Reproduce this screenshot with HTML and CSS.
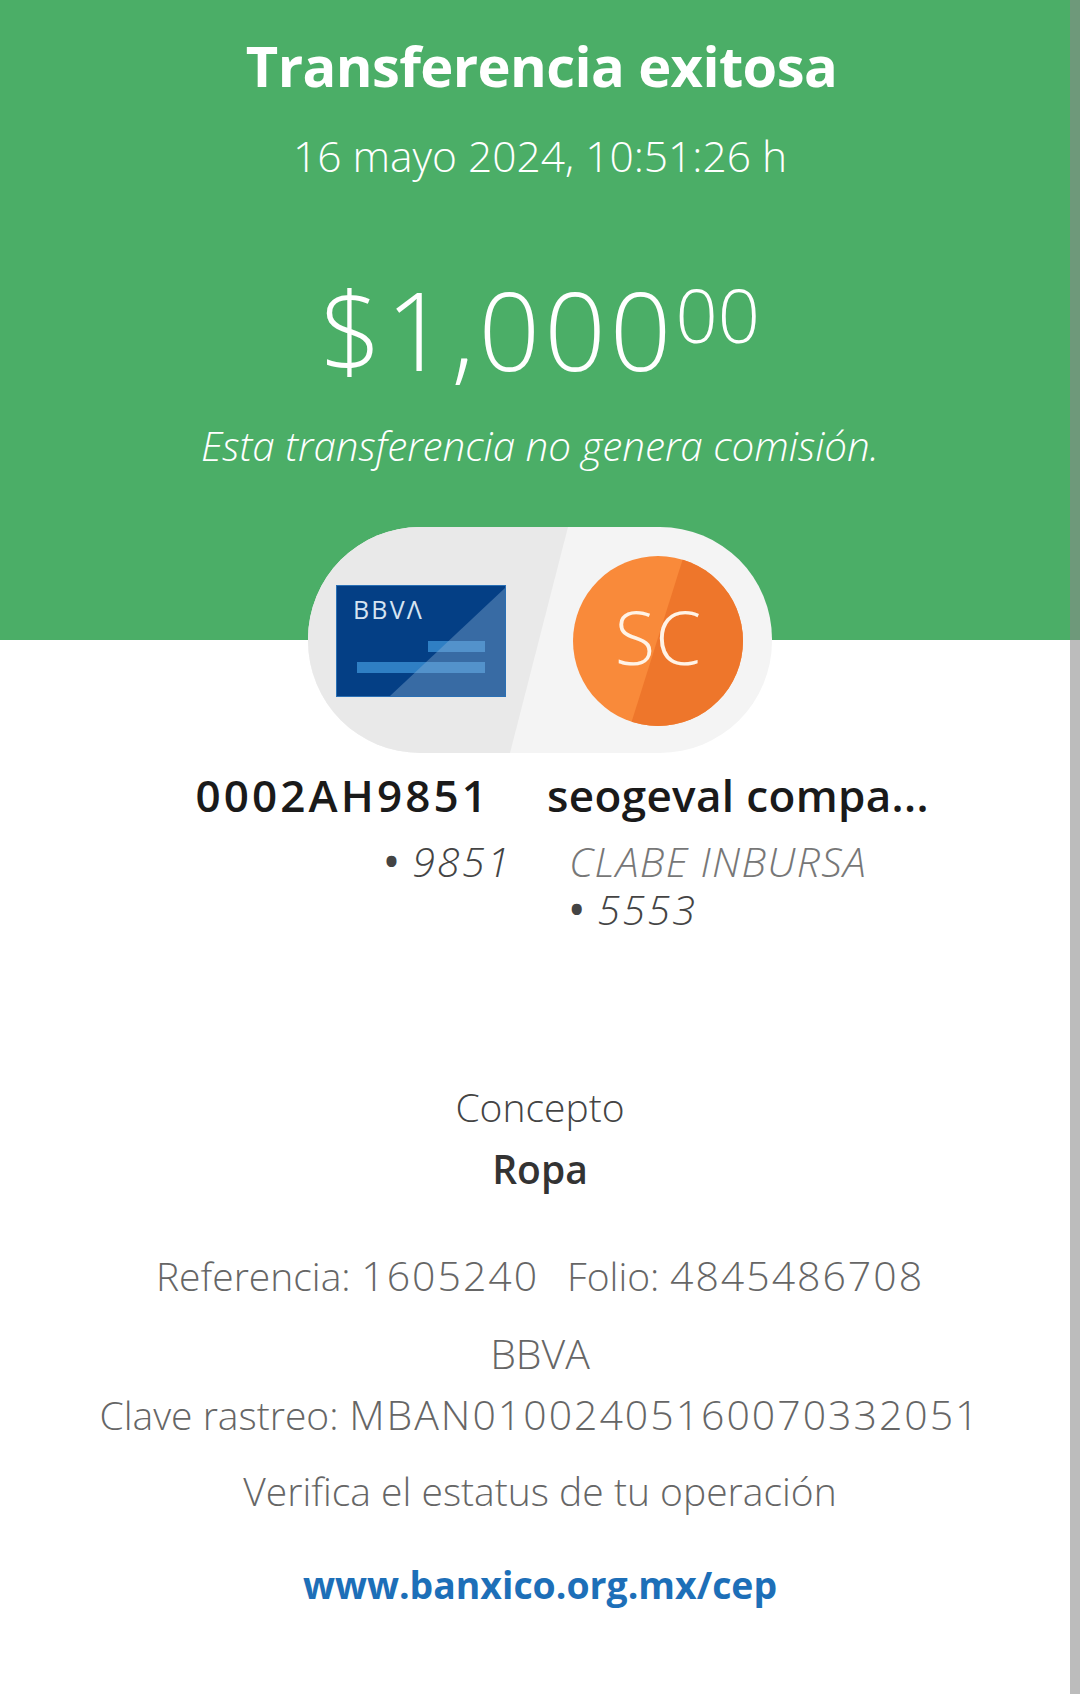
FILE: index.html
```html
<!DOCTYPE html>
<html>
<head>
    <title>Transferencia exitosa</title>
    <link rel="stylesheet" href="styles.css">
</head>
<body>
    <div class="header">
        <h1 class="title">Transferencia exitosa</h1>
        <div class="date">16 mayo 2024, 10:51:26 h</div>
        <div class="amount">$1,000<sup class="cents">00</sup></div>
        <div class="fee">Esta transferencia no genera comisión.</div>
    </div>

    <svg class="pill" width="464" height="226" viewBox="0 0 464 226">
        <defs>
            <clipPath id="pillClip"><rect width="464" height="226" rx="112" ry="112"/></clipPath>
            <clipPath id="circleClip"><circle cx="350" cy="114" r="85"/></clipPath>
        </defs>
        <g clip-path="url(#pillClip)">
            <rect width="464" height="226" fill="#f4f4f4"/>
            <polygon points="0,0 260,0 202,226 0,226" fill="#e9e9e9"/>
        </g>
        <rect x="28.5" y="58.5" width="169" height="111" fill="#043f85" stroke="#2a70b5"/>
        <rect x="120" y="114" width="57" height="11" fill="#2f7fc4"/>
        <rect x="49" y="135" width="128" height="11" fill="#2f7fc4"/>
        <polygon points="197,61 82,169 197,169" fill="#8fb4d8" opacity="0.38"/>
        <text class="card-logo" x="45" y="92">BBVΛ</text>
        <circle cx="350" cy="114" r="85" fill="#f98a3a"/>
        <polygon points="377,25 322,200 440,200 440,25" fill="#ee762b" clip-path="url(#circleClip)"/>
        <text class="initials" x="350" y="138">SC</text>
    </svg>

    <div class="accounts">
        <div class="account account-from">
            <div class="name">0002AH9851</div>
            <div class="sub"><span class="dot">•</span> 9851</div>
        </div>
        <div class="account account-to">
            <div class="name">seogeval compa...</div>
            <div class="bank">CLABE INBURSA</div>
            <div class="sub"><span class="dot">•</span> 5553</div>
        </div>
    </div>

    <div class="details">
        <div class="concept-label">Concepto</div>
        <div class="concept">Ropa</div>
        <div class="info refs">
            <span><span class="label">Referencia:</span> <span class="code">1605240</span></span>
            <span><span class="label">Folio:</span> <span class="code">4845486708</span></span>
        </div>
        <div class="info issuer">BBVA</div>
        <div class="info tracking"><span class="label">Clave rastreo:</span> <span class="code">MBAN01002405160070332051</span></div>
        <div class="info verify">Verifica el estatus de tu operación</div>
        <a class="link" href="#">www.banxico.org.mx/cep</a>
    </div>

    <div class="scrollbar"></div>
</body>
</html>
```

FILE: styles.css
```css
html, body {
    margin: 0;
    padding: 0;
    height: 1694px;
    overflow: hidden;
}
body {
    font-family: "Open Sans", "Liberation Sans", sans-serif;
    font-weight: 300;
    background-color: #fff;
    color: #666;
    position: relative;
}
.header {
    box-sizing: border-box;
    height: 640px;
    padding-top: 30px;
    background-color: #4bae67;
    color: #fff;
    text-align: center;
}
.title {
    margin: 0;
    padding-left: 3px;
    font-size: 56px;
    line-height: 70px;
    font-weight: 700;
    letter-spacing: -0.6px;
}
.date {
    margin-top: 29px;
    font-size: 42.5px;
    line-height: 54px;
}
.amount {
    margin-top: 82px;
    font-size: 108px;
    line-height: 130px;
    letter-spacing: 4px;
}
.cents {
    font-size: 74px;
    line-height: 0;
    letter-spacing: 0;
    vertical-align: 28px;
}
.fee {
    margin-top: 25px;
    font-size: 40.4px;
    line-height: 52px;
    font-style: italic;
}
.pill {
    display: block;
    margin: -113px auto 0;
    position: relative;
}
.card-logo {
    font-size: 25px;
    font-weight: 500;
    letter-spacing: 2.2px;
    fill: #d6e4f2;
}
.initials {
    font-size: 74px;
    font-weight: 300;
    fill: #fff3e6;
    text-anchor: middle;
}
.accounts {
    display: grid;
    grid-template-columns: 547px 1fr;
    margin-top: 12px;
}
.account-from {
    text-align: right;
    padding-right: 35px;
}
.name {
    font-size: 44px;
    line-height: 60px;
    font-weight: 600;
    letter-spacing: 0.35px;
    color: #1a1a1a;
    white-space: nowrap;
}
.account-from .name {
    padding-right: 22px;
    letter-spacing: 3.1px;
}
.bank, .sub {
    font-size: 41px;
    line-height: 48px;
    font-style: italic;
}
.bank {
    margin: 12px 0 0 22px;
    letter-spacing: 1.3px;
    color: #777;
}
.sub {
    letter-spacing: 2.4px;
    color: #444;
}
.dot {
    font-style: normal;
    font-weight: 600;
    letter-spacing: 0;
}
.account-from .sub {
    margin-top: 12px;
}
.account-to .sub {
    margin-left: 22px;
}
.details {
    margin-top: 150px;
    text-align: center;
}
.concept-label {
    font-size: 39px;
    line-height: 48px;
    color: #444;
}
.concept {
    margin-top: 14px;
    font-size: 39px;
    line-height: 48px;
    font-weight: 600;
    color: #333;
}
.info {
    font-size: 41px;
    line-height: 48px;
}
.label {
    font-size: 39px;
}
.code {
    letter-spacing: 2px;
}
.refs {
    display: flex;
    justify-content: center;
    gap: 28px;
    margin-top: 58px;
}
.issuer {
    margin-top: 29px;
}
.tracking {
    margin-top: 13px;
}
.verify {
    margin-top: 28px;
    font-size: 39px;
}
.link {
    display: block;
    margin-top: 46px;
    font-size: 37.4px;
    line-height: 48px;
    font-weight: 700;
    color: #1d6fb8;
    text-decoration: none;
}
.scrollbar {
    position: absolute;
    top: 0;
    right: 0;
    width: 10px;
    height: 100%;
    background-color: rgba(138, 138, 138, 0.57);
}
```
